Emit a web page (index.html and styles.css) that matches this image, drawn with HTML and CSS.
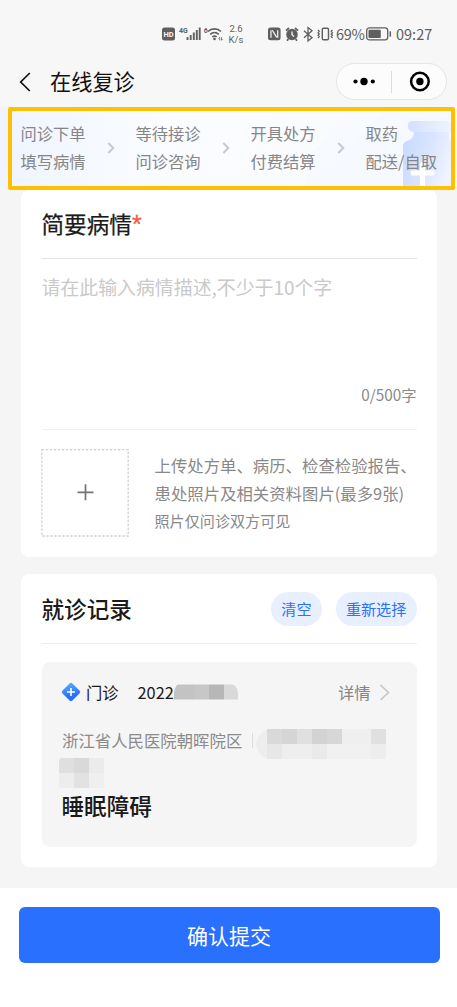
FILE: index.html
```html
<!DOCTYPE html>
<html lang="zh-CN">
<head>
<meta charset="utf-8">
<title>在线复诊</title>
<link rel="stylesheet" href="styles.css">
</head>
<body>
<header class="status">
  <svg class="status-left" width="62" height="24" viewBox="0 0 62 24" fill="none" stroke="#5f5f5f">
    <rect x="0" y="6.500" width="13" height="13" rx="2.5" fill="#5f5f5f" stroke="none"/>
    <text x="1.4" y="15.9" class="hd">HD</text>
    <text x="17" y="11.500" class="gen">4G</text>
    <path d="M25.500 19v-3M28.700 19v-5M31.800 19v-7.500M34.800 19V9M37.700 19V6.500" stroke-width="1.900"/>
    <text x="41.700" y="11.500" class="gen">6</text>
    <path d="M46 10.500a9.500 9.500 0 0 1 13 0M48.200 13.300a6.500 6.500 0 0 1 8.600 0M50.300 15.900a3.800 3.800 0 0 1 4.400 0" stroke-width="1.700"/>
    <circle cx="52.500" cy="18" r="1.300" fill="#5f5f5f" stroke="none"/>
    <path d="M56.500 17.500l1.200-1.200v3M59.500 16.300v3l1.200-1.200" stroke-width=".8"/>
  </svg>
  <div class="speed"><span>2.6</span><span>K/s</span></div>
  <svg class="status-mid" width="66" height="24" viewBox="0 0 66 24" fill="none" stroke="#5f5f5f">
    <rect x="0" y="5.500" width="12.600" height="12.800" rx="2.500" fill="#5f5f5f" stroke="none"/>
    <path d="M3 8.200v7.600M4.300 8.200l4.400 7.200M9.700 15.800V8.200" stroke="#f7f7f7" stroke-width="1.200"/>
    <circle cx="24" cy="12.500" r="5.800" fill="#5f5f5f" stroke="none"/>
    <path d="M18 8.700l3-2.700M30 8.700l-3-2.700M20.300 17l-1.200 1.700M27.700 17l1.200 1.700" stroke-width="1.700"/>
    <path d="M24 9.500v3.300l2 1.700" stroke="#f7f7f7" stroke-width="1.300"/>
    <path d="M36 8.700l8 7-4 3.200V5.500l4 3.200-8 7" stroke-width="1.300"/>
    <rect x="54.300" y="6.200" width="6.200" height="11.600" rx="1.200" stroke-width="1.400"/>
    <path d="M50 8l1.300 1.300L50 10.700l1.300 1.300L50 13.300l1.300 1.300L50 16M64.500 8l-1.300 1.300 1.300 1.400-1.300 1.300 1.300 1.300-1.300 1.300 1.300 1.400" stroke-width="1.200"/>
  </svg>
  <span class="percent">69%</span>
  <svg class="battery" width="26" height="14" viewBox="0 0 26 14">
    <rect x=".7" y=".9" width="21" height="12" rx="2.600" fill="none" stroke="#5f5f5f" stroke-width="1.300"/>
    <rect x="2.500" y="2.700" width="12.300" height="8.400" rx="1" fill="#5f5f5f"/>
    <path d="M24.300 4.300v5.400" stroke="#5f5f5f" stroke-width="1.500"/>
  </svg>
  <span class="time">09:27</span>
</header>

<nav class="nav">
  <svg class="back" width="12" height="20" viewBox="0 0 12 20"><path d="M10.800 1L1.700 10l9.100 9" fill="none" stroke="#111" stroke-width="1.700"/></svg>
  <h1 class="nav-title">在线复诊</h1>
  <div class="capsule">
    <svg width="110" height="36" viewBox="0 0 110 36">
      <circle cx="18.500" cy="17.500" r="2.100"/><circle cx="27" cy="17.500" r="3.700"/><circle cx="35.800" cy="17.500" r="2.100"/>
      <path d="M54.500 7v22" stroke="#dcdcdc"/>
      <circle cx="82.900" cy="17.500" r="8.800" fill="none" stroke="#000" stroke-width="2.500"/>
      <circle cx="82.900" cy="17.500" r="3.700"/>
    </svg>
  </div>
</nav>

<section class="steps">
  <svg class="bottle" width="150" height="78" viewBox="0 0 150 78">
    <defs>
      <linearGradient id="body" gradientUnits="userSpaceOnUse" x1="96" y1="35" x2="146" y2="50"><stop offset="0" stop-color="#c9daff"/><stop offset=".5" stop-color="#d9e4ff"/><stop offset="1" stop-color="#eff4ff"/></linearGradient>
      <linearGradient id="cap" x1="0" y1="0" x2="1" y2="0"><stop offset="0" stop-color="#d3e0ff"/><stop offset="1" stop-color="#f0f5ff"/></linearGradient>
      <linearGradient id="beam" x1="0" y1="0" x2="1" y2="0"><stop offset="0" stop-color="#f3f7ff"/><stop offset="1" stop-color="#f8fbff"/></linearGradient>
    </defs>
    <path d="M55 0h25L0 78h-35z" fill="url(#beam)" opacity=".7"/>
    <path d="M80 0h70v78H0z" fill="#f6f9ff"/>
    <path d="M107 24h35v6q0 2 5 4 1 2 1 5v39H96V38q0-4 4-5 7-2 7-9z" fill="url(#body)"/>
    <path d="M105 13h37q5 0 5 5.500t-5 5.500h-36q-5-1-5-6 0-5 4-5z" fill="url(#cap)"/>
    <path d="M106 65h19M115.500 56.500V78" stroke="#fff" stroke-width="5" stroke-linecap="round"/>
  </svg>
  <div class="step">问诊下单<br>填写病情</div>
  <svg class="arrow" width="8" height="12" viewBox="0 0 8 12"><path d="M1.300 1l5 5-5 5"/></svg>
  <div class="step">等待接诊<br>问诊咨询</div>
  <svg class="arrow" width="8" height="12" viewBox="0 0 8 12"><path d="M1.300 1l5 5-5 5"/></svg>
  <div class="step">开具处方<br>付费结算</div>
  <svg class="arrow" width="8" height="12" viewBox="0 0 8 12"><path d="M1.300 1l5 5-5 5"/></svg>
  <div class="step">取药<br>配送/自取</div>
  <div class="highlight"></div>
</section>

<main class="content">
  <section class="card complaint">
    <h2 class="card-title">简要病情<span class="required">*</span></h2>
    <div class="editor">
      <p class="placeholder">请在此输入病情描述,不少于10个字</p>
      <p class="counter">0/500字</p>
    </div>
    <div class="upload">
      <div class="upload-box">
        <svg width="88" height="88" viewBox="0 0 88 88" fill="none">
          <rect x=".9" y=".7" width="86.300" height="86.300" stroke="#d2d2d2" stroke-width="1.300" stroke-dasharray="2.500 1.500"/>
          <path d="M36.500 43.300h16M44.500 35.300v16" stroke="#737373" stroke-width="1.700"/>
        </svg>
      </div>
      <div class="upload-note">
        <p>上传处方单、病历、检查检验报告、</p>
        <p>患处照片及相关资料图片(最多9张)</p>
        <p class="small">照片仅问诊双方可见</p>
      </div>
    </div>
  </section>

  <section class="card records">
    <div class="records-head">
      <h2 class="card-title">就诊记录</h2>
      <button class="pill">清空</button>
      <button class="pill">重新选择</button>
    </div>
    <article class="record">
      <div class="record-top">
        <svg class="badge" width="20" height="20" viewBox="0 0 20 20">
          <defs><linearGradient id="blue" x1="0" y1="0" x2="1" y2=".6"><stop offset=".1" stop-color="#51a8ff"/><stop offset=".8" stop-color="#2970ff"/></linearGradient></defs>
          <rect x="3" y="3" width="14" height="14" rx="2" fill="url(#blue)" transform="rotate(45 10 10)"/>
          <path d="M6 10h8M10 6v8" stroke="#fff" stroke-width="1.600"/>
        </svg>
        <span class="kind">门诊</span>
        <span class="date">2022</span>
        <svg class="mask-date" width="65" height="16" viewBox="0 0 65 16">
          <path d="M4 .5h17V15.500H0V9q1-7 4-8.500z" fill="#c3c3c3"/>
          <path d="M21 .5h14v15H21z" fill="#c7c7c7"/>
          <path d="M35 .5h15v15H35z" fill="#b7b7b7"/>
          <path d="M50 .5h9q5 3 5 10v5H50z" fill="#d9d9d9"/>
        </svg>
        <span class="detail">详情</span>
        <svg class="more" width="11" height="17" viewBox="0 0 11 17"><path d="M1.500 1l8 7.500-8 7.500" fill="none" stroke="#c4c4c4" stroke-width="1.500"/></svg>
      </div>
      <div class="hospital">
        <span>浙江省人民医院朝晖院区</span><i class="bar"></i>
        <svg width="131" height="30" viewBox="0 0 131 30">
          <path d="M11.500 0v30Q2 27 0 15 2 4 11.500 0z" fill="#ededed"/>
          <path d="M11 0h30v15H11z" fill="#d9d9d9"/><path d="M26 0h15v15H26z" fill="#d5d5d5"/>
          <path d="M41 0h15v15H41z" fill="#e0e0e0"/><path d="M56 0h15v15H56z" fill="#d3d3d3"/>
          <path d="M71 0h15v15H71z" fill="#d7d7d7"/><path d="M86 0h29v15H86z" fill="#efefef"/>
          <path d="M115 0h15v15h-15z" fill="#e0e0e0"/>
          <path d="M11 15h15v15H11z" fill="#e7e7e7"/><path d="M26 15h30v15H26z" fill="#eee"/>
          <path d="M56 15h15v15H56z" fill="#eaeaea"/><path d="M71 15h44v15H71z" fill="#f1f1f1"/>
          <path d="M115 15h15v15h-15z" fill="#ededed"/>
        </svg>
      </div>
      <svg class="mask-name" width="45" height="30" viewBox="0 0 45 30">
        <path d="M3 0h12v15H0V3q0-3 3-3z" fill="#dfdfdf"/><path d="M15 0h15v15H15z" fill="#d9d9d9"/><path d="M30 0h15v15H30z" fill="#ebebeb"/>
        <path d="M0 15h15v15H3q-3 0-3-3z" fill="#ededed"/><path d="M15 15h15v15H15z" fill="#e2e2e2"/><path d="M30 15h15v15H30z" fill="#efefef"/>
      </svg>
      <h3 class="diagnosis">睡眠障碍</h3>
    </article>
  </section>
</main>

<footer class="footer"><button class="submit">确认提交</button></footer>
</body>
</html>
```
FILE: styles.css
```css
* { box-sizing: border-box; margin: 0; padding: 0; }

body {
  display: flex;
  flex-direction: column;
  width: 457px;
  height: 1007px;
  overflow: hidden;
  background: #f5f5f5;
  color: #1a1a1a;
  font-family: "Noto Sans CJK SC", sans-serif;
}

svg { display: block; flex: none; }
span, p, h1, h2, h3 { white-space: nowrap; }
button { border: 0; font-family: inherit; white-space: nowrap; }

/* Status bar */
.status {
  display: flex;
  align-items: center;
  height: 57px;
  padding: 11px 0 0 162px;
  background: #f7f7f7;
  color: #5f5f5f;
}
.status-left { margin-top: -2px; }
.hd { font: bold 7.500px Roboto, sans-serif; fill: #f7f7f7; stroke: none; }
.gen { font: bold 7px Roboto, sans-serif; fill: #5f5f5f; stroke: none; }
.speed {
  display: flex;
  flex-direction: column;
  align-items: center;
  width: 16px;
  margin-left: 4px;
  font: 9.500px/11.500px Roboto, sans-serif;
}
.status-mid { margin-left: 24px; }
.percent { width: 28px; margin-left: 2px; font-size: 14.500px; line-height: 20px; letter-spacing: -.3px; }
.battery { margin-left: 2px; }
.time { margin-left: 4px; font-size: 14.500px; line-height: 20px; }

/* Navigation */
.nav {
  display: flex;
  align-items: center;
  height: 50px;
  padding-left: 19px;
  background: #f7f7f7;
}
.back { margin-top: -1px; }
.nav-title { flex: 1; margin: -2px 0 0 19px; font-size: 21.200px; line-height: 30px; font-weight: 400; color: #111; }
.capsule {
  width: 111px;
  height: 37px;
  margin: -1px 10px 0 0;
  border: 1px solid #e5e5e5;
  border-radius: 19px;
  background: #fcfcfc;
}

/* Consultation steps */
.steps {
  position: relative;
  display: flex;
  align-items: center;
  height: 80px;
  padding: 1px 0 0 20.500px;
  background: linear-gradient(90deg, #eff4ff, #fafcff 35%, #f9fbff 70%, #f6f9ff);
}
.step { position: relative; width: 86.500px; font-size: 16.300px; line-height: 27.500px; color: #868686; white-space: nowrap; }
.arrow { position: relative; margin-right: 20.500px; fill: none; stroke: #c8c8c8; stroke-width: 1.900; }
.bottle { position: absolute; right: 0; top: 1px; }
.highlight { position: absolute; left: 8px; top: 0; width: 447px; height: 83px; border: 4px solid #ffc000; border-radius: 2px; }

/* Cards */
.content { flex: 1; padding: 3px 20px 0 21px; }
.card { padding: 0 20.500px; border-radius: 8px; background: #fff; }
.card-title { font-size: 22.600px; line-height: 32px; font-weight: 500; }
.complaint { height: 367px; }
.complaint .card-title { height: 69px; padding-top: 18px; border-bottom: 1px solid #e5e5e5; font-weight: 400; -webkit-text-stroke: .25px #1a1a1a; }
.required { font: 25px/20px "Liberation Sans", sans-serif; color: #fa5745; -webkit-text-stroke: .3px #fa5745; }
.editor { display: flex; flex-direction: column; justify-content: space-between; height: 171px; padding: 14px 0 21px; border-bottom: 1.500px solid #f1f1f1; }
.placeholder { font-size: 18.900px; line-height: 28px; color: #c9c9c9; }
.counter { align-self: flex-end; font-size: 15.300px; line-height: 28px; color: #8a8a8a; }
.upload { display: flex; padding-top: 19px; }
.upload-box { margin-left: -.5px; }
.upload-note { margin-left: 25.500px; padding-top: 3px; font-size: 16.400px; line-height: 27.500px; color: #888; }
.upload-note .small { font-size: 15.100px; }

.records { height: 293px; margin-top: 17px; }
.records-head { display: flex; align-items: center; height: 70px; border-bottom: 1px solid #eee; }
.records-head .card-title { flex: 1; }
.pill {
  height: 34px;
  margin-left: 14px;
  padding: 0 10.200px;
  border-radius: 17px;
  background: #e8f0ff;
  color: #2970ff;
  font-size: 15.100px;
  line-height: 33px;
}
.record { height: 185px; margin-top: 18px; padding: 18px 20px; border-radius: 8px; background: #f5f5f5; }
.record-top { display: flex; align-items: center; height: 24px; font-size: 16.300px; line-height: 24px; }
.badge { margin-left: -1px; }
.kind { margin-left: 5.500px; }
.date { margin-left: 19px; }
.detail { margin-left: auto; color: #858585; }
.more { margin: 0 6.500px 0 8.500px; }
.hospital { display: flex; align-items: center; height: 30px; margin: 25px 0 0 .5px; font-size: 16.400px; line-height: 22px; color: #8b8b8b; }
.hospital span { padding-bottom: 8px; }
.hospital svg { margin-left: 3px; }
.bar { width: 1px; height: 15px; margin: 0 0 8px 10px; background: #ddd; }
.mask-name { margin: -1px 0 0 -3px; }
.diagnosis { margin-top: 2px; font-size: 22.600px; line-height: 32px; font-weight: 500; }

/* Submit */
.footer { height: 119px; padding: 19px 17.500px 0 18.500px; background: #fff; }
.submit { display: block; width: 100%; height: 56px; border-radius: 6px; background: #2970ff; color: #fff; font-size: 21px; line-height: 56px; }
```
